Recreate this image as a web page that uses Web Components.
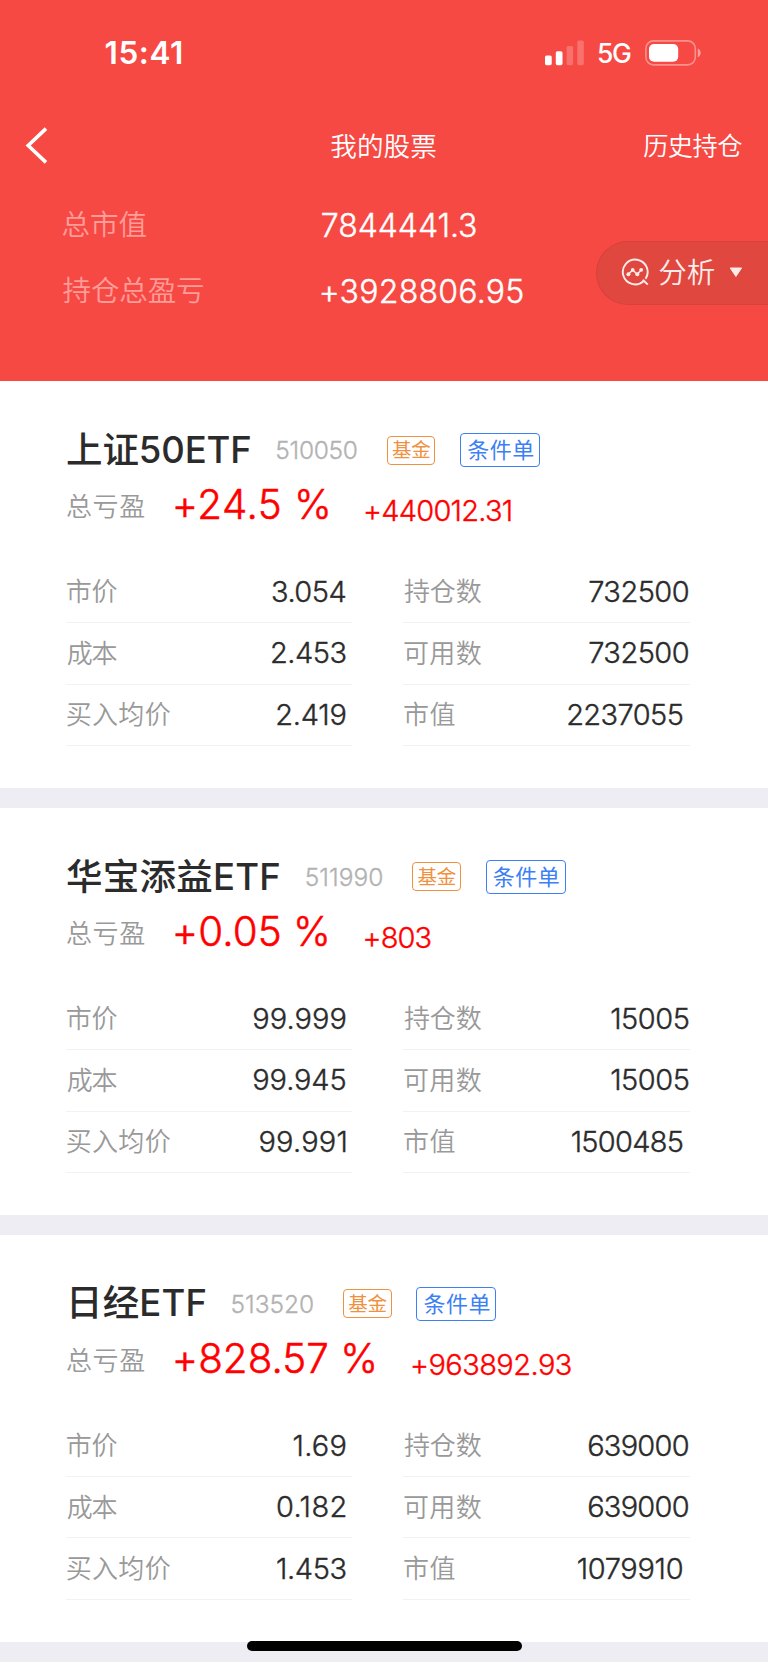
<!DOCTYPE html>
<html lang="zh-CN">
<head>
<meta charset="utf-8">
<title>我的股票</title>
<style>
  html, body { margin: 0; background: #fff; }
  body { font-family: Inter, "Noto Sans CJK SC", sans-serif; }
</style>
</head>
<body>
<portfolio-page></portfolio-page>
<script>
/* Text whose box is its ink width; letter-spacing is spread so that it fills w pixels.
   Light numerals get a hairline stroke, for a weight between light and regular. */
const pen = document.createElement('canvas').getContext('2d');
class FitText extends HTMLElement {
  constructor() {
    super();
    this.attachShadow({ mode: 'open' }).innerHTML =
      `<style>:host{display:block;flex:none;white-space:pre;line-height:1.2}span{display:block}</style><span><slot></slot></span>`;
  }
  connectedCallback() {
    const s = this.getAttribute('s'), k = this.getAttribute('k') || 300;
    const w = +this.getAttribute('w'), t = this.textContent, dy = +this.getAttribute('dy') || 0;
    pen.font = `${k} ${s}px Inter, "Noto Sans CJK SC", sans-serif`;
    const m = pen.measureText(t);
    const left = -m.actualBoundingBoxLeft, right = m.actualBoundingBoxRight;
    const n = t.length - 1;
    const gap = (w - (right - left)) / n;
    const span = this.shadowRoot.querySelector('span');
    this.style.cssText += `;font-size:${s}px;font-weight:${k};width:${w}px;margin-top:${2 * dy}px`;
    const hair = k == 300 ? `-webkit-text-stroke:${(s * .013).toFixed(2)}px currentColor;` : '';
    span.style.cssText = `${hair}letter-spacing:${gap}px;margin-left:${-left}px;margin-right:-20px`;
  }
}
customElements.define('fit-text', FitText);

function define(name, html) {
  customElements.define(name, class extends HTMLElement {
    constructor() {
      super();
      const t = document.createElement('template');
      t.innerHTML = html;
      this.attachShadow({ mode: 'open' }).append(t.content.cloneNode(true));
    }
  });
}

define('status-bar', `
<style>
:host{display:flex;align-items:center;height:105px;padding:0 67px 0 105.5px;box-sizing:border-box;color:#fff}
.sp{flex:1}
svg{display:block;flex:none}
</style>
<fit-text s="31.5" k="600" w="76.5" dy=".3">15:41</fit-text>
<div class="sp"></div>
<svg width="39" height="26" viewBox="0 0 39 26" fill="#fff">
  <rect x="0" y="15.5" width="6.7" height="9.7" rx="1.6"/>
  <rect x="10.8" y="11.2" width="6.7" height="14" rx="1.6"/>
  <rect x="21.6" y="6" width="6.5" height="19.2" rx="1.6" opacity=".22"/>
  <rect x="32.3" y="0.6" width="6.5" height="24.6" rx="1.6" opacity=".22"/>
</svg>
<fit-text style="margin-left:13.8px" s="26.5" k="500" w="33" dy=".9">5G</fit-text>
<svg style="margin-left:14px" width="56" height="26" viewBox="0 0 56 26">
  <rect x=".9" y=".9" width="49.4" height="24" rx="7.6" fill="none" stroke="#fff" stroke-opacity=".4" stroke-width="1.6"/>
  <rect x="4" y="4" width="29.2" height="17.8" rx="5" fill="#fff"/>
  <path d="M52.8 8.6c3.8 1.5 3.8 7.1 0 8.6z" fill="#fff" opacity=".5"/>
</svg>`);

define('nav-bar', `
<style>
:host{display:grid;grid-template-columns:1fr auto 1fr;align-items:center;height:81px;padding:0 25.8px 0 25.3px;color:#fff}
svg{display:block}
.r{justify-self:end}
</style>
<svg width="23" height="37" viewBox="0 0 23 37"><path d="M21 1.6 3.2 18.5 21 35.4" fill="none" stroke="#fff" stroke-width="3.6"/></svg>
<fit-text s="26.6" k="350" w="105" dy="1">我的股票</fit-text>
<fit-text class="r" s="25.2" k="350" w="99" dy=".7">历史持仓</fit-text>`);

define('summary-row', `
<style>
:host{display:flex;align-items:center;height:65.5px;color:#fff}
.l{width:259.3px;color:#ff9d99}
</style>
<div class="l"><slot name="label"></slot></div><slot name="value"></slot>`);

define('analysis-pill', `
<style>
:host{display:flex;align-items:center;box-sizing:border-box;height:64px;width:172.2px;padding-left:24px;
 border:1.5px solid #d9413c;border-right:0;border-radius:32px 0 0 32px;background:#df473f;color:#fdebe9}
svg{display:block;flex:none}
</style>
<svg width="29" height="29" viewBox="0 0 29 29" fill="none" stroke="#fdebe9" stroke-width="1.9">
  <path d="M22.5 23.2a12.4 12.4 0 1 1 2-2.3"/><path d="M21.8 21.8 26.8 26.6"/>
  <path d="M7.2 16.5 11.6 12 16.3 16.3 20.2 12" stroke-width="1.5"/>
  <g fill="#fdebe9" stroke="none"><circle cx="7.4" cy="16.3" r="2"/><circle cx="11.7" cy="11.9" r="1.9"/><circle cx="16.3" cy="16.3" r="2"/><circle cx="20.2" cy="11.8" r="1.9"/></g>
</svg>
<fit-text style="margin-left:9.5px" s="28.5" k="350" w="55.5" dy=".2">分析</fit-text>
<svg style="margin-left:14px" width="14" height="11" viewBox="0 0 14 11"><path d="M1.2 1h11.4L6.9 9.4z" fill="#fdebe9" stroke="#fdebe9" stroke-linejoin="round"/></svg>`);

define('tag-box', `
<style>
:host{display:flex;align-items:center;justify-content:center;box-sizing:border-box;flex:none;
 border:1.4px solid currentColor;border-radius:4px}
:host([kind=fund]){width:48.7px;height:29px;margin-left:30px;color:#f0913f}
:host([kind=order]){width:80px;height:33.4px;margin-left:24.8px;color:#3d7ff5}
</style><slot></slot>`);

define('data-row', `
<style>
:host{display:flex;align-items:center;justify-content:space-between;box-sizing:border-box;height:61.45px;
 border-bottom:1.5px solid #f2f2f3;color:#2b2b2b;padding:0 var(--end,0) 0 1px}
.l{color:#999}
</style><div class="l"><slot name="label"></slot></div><slot></slot>`);

define('stock-card', `
<style>
:host{display:block;box-sizing:border-box;height:426.9px;padding-top:43.8px;background:#fff;border-bottom:20.5px solid #eeedf3}
.head,.gain{display:flex;align-items:center;height:50px;padding-left:67px}
.head{color:#2b2b2b}
.gain{margin-top:5.3px}
.grid{display:grid;grid-template-columns:286.7px 286.7px;column-gap:50.6px;padding-left:65.7px;margin-top:31.4px}
</style>
<div class="head"><slot name="head"></slot></div>
<div class="gain"><slot name="gain"></slot></div>
<div class="grid"><slot></slot></div>`);

const stocks = [
  { name: ['上证50ETF', 183.3, 0], code: ['510050', 80.5, 26], pct: ['+24.5 %', 152.3], gain: ['+440012.31', 145.7, 37],
    rows: [['3.054', 73.5], ['732500', 99.5], ['2.453', 73.5], ['732500', 99.5], ['2.419', 68.3], ['2237055', 114.5]] },
  { name: ['华宝添益ETF', 212.3, 0], code: ['511990', 76.5, 26.4], pct: ['+0.05 %', 151.3], gain: ['+803', 66, 37.5],
    rows: [['99.999', 92.3], ['15005', 77.5], ['99.945', 92.3], ['15005', 77.5], ['99.991', 86], ['1500485', 111]] },
  { name: ['日经ETF', 133.5, 5], code: ['513520', 81.5, 26], pct: ['+828.57 %', 198.5], gain: ['+963892.93', 158.7, 37.8],
    rows: [['1.69', 52], ['639000', 100.5], ['0.182', 68.5], ['639000', 100.5], ['1.453', 68.5], ['1079910', 105]] }
];
const labels = [['市价', 50.8], ['持仓数', 77.8], ['成本', 50.8], ['可用数', 77.8], ['买入均价', 104], ['市值', 50.6]];
const ends = [6.9, 1, 6.9, 1, 6.9, 7];

const card = s => `<stock-card>
  <fit-text slot="head" s="36.5" k="500" w="${s.name[1]}" dy=".5" style="margin-left:${s.name[2]}px">${s.name[0]}</fit-text>
  <fit-text slot="head" s="24.5" w="${s.code[1]}" dy=".5" style="margin-left:${s.code[2]}px;color:#b2b2b2">${s.code[0]}</fit-text>
  <tag-box slot="head" kind="fund"><fit-text s="19.5" k="400" w="38.3" dy=".4">基金</fit-text></tag-box>
  <tag-box slot="head" kind="order"><fit-text s="22" k="400" w="66" dy=".4">条件单</fit-text></tag-box>
  <fit-text slot="gain" s="26" k="350" w="77.2" dy="1.4" style="color:#999">总亏盈</fit-text>
  <fit-text slot="gain" s="40.3" w="${s.pct[1]}" dy="0" style="margin-left:31.6px;color:#f00">${s.pct[0]}</fit-text>
  <fit-text slot="gain" s="29" w="${s.gain[1]}" dy="6.2" style="margin-left:${s.gain[2]}px;color:#f00">${s.gain[0]}</fit-text>
  ${s.rows.map((r, i) => `<data-row style="--end:${ends[i]}px">
    <fit-text slot="label" s="26" k="350" w="${labels[i][1]}" dy="-.1">${labels[i][0]}</fit-text>
    <fit-text s="29" w="${r[1]}" dy=".4">${r[0]}</fit-text></data-row>`).join('')}
</stock-card>`;

define('portfolio-page', `
<style>
:host{display:block;position:relative;width:768px;height:1665px;overflow:hidden;background:#fff}
header{box-sizing:border-box;height:381.3px;background:#f74944}
.sum{padding:6.8px 0 0 62.5px}
analysis-pill{position:absolute;top:240.8px;right:0}
.home{position:absolute;left:246.5px;top:1641.3px;width:275px;height:9.4px;border-radius:5px;background:#000}
</style>
<header>
  <status-bar></status-bar>
  <nav-bar></nav-bar>
  <div class="sum">
    <summary-row><fit-text slot="label" s="28.5" k="350" w="84" dy="-.5">总市值</fit-text><fit-text slot="value" s="32" w="154.3" dy="1">7844441.3</fit-text></summary-row>
    <summary-row><fit-text slot="label" s="28.5" k="350" w="140.6" dy="-.3">持仓总盈亏</fit-text><fit-text slot="value" s="32" w="200.5" dy=".8">+3928806.95</fit-text></summary-row>
  </div>
</header>
<main>${stocks.map(card).join('')}</main>
<analysis-pill></analysis-pill>
<div class="home"></div>`);
</script>
</body>
</html>
